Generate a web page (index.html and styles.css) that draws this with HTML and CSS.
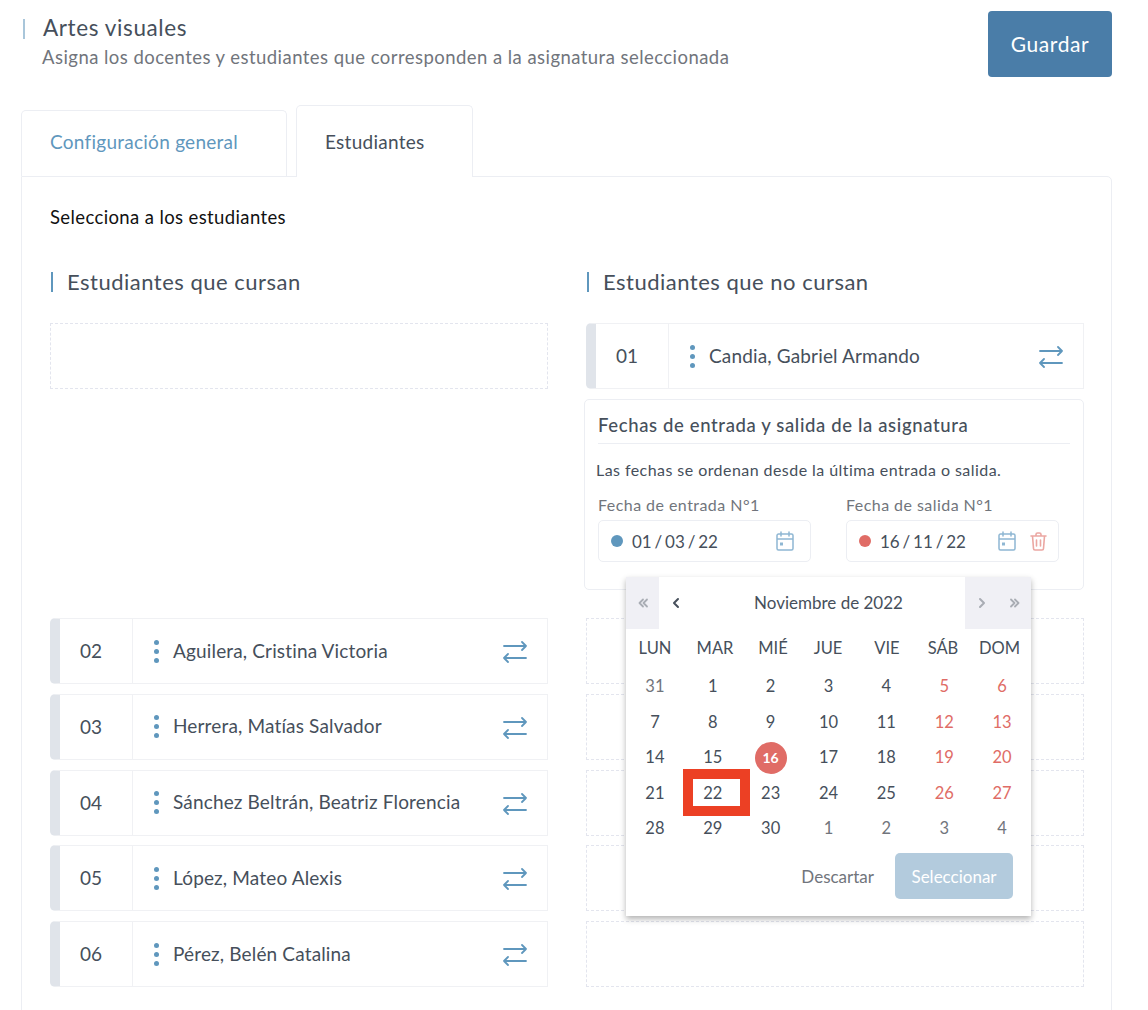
FILE: index.html
```html
<!DOCTYPE html>
<html lang="es">
<head>
    <meta charset="UTF-8">
    <meta name="viewport" content="width=device-width, initial-scale=1.0">
    <title>Artes visuales</title>
    <link rel="stylesheet" href="styles.css">
</head>
<body>
    <svg class="icon-defs" width="0" height="0" aria-hidden="true">
        <symbol id="swap" viewBox="0 0 24 24">
            <path d="M1 7H23M19 3L23 7L19 11M23 19H1M5 15L1 19L5 23" fill="none" stroke="currentColor" stroke-width="1.8" stroke-linecap="round" stroke-linejoin="round"/>
        </symbol>
        <symbol id="calendar" viewBox="0 0 18 20">
            <path d="M2.500 3H15.500A1.500 1.500 0 0 1 17 4.500V17.500A1.500 1.500 0 0 1 15.500 19H2.500A1.500 1.500 0 0 1 1 17.500V4.500A1.500 1.500 0 0 1 2.500 3ZM1 8H17M5 1V5M13 1V5" fill="none" stroke="currentColor" stroke-width="1.500" stroke-linecap="round"/>
            <rect x="4" y="11.500" width="3" height="3" fill="currentColor"/>
        </symbol>
        <symbol id="trash" viewBox="0 0 17 19">
            <path d="M1 4H16M6 4V2.500A1.500 1.500 0 0 1 7.500 1H9.500A1.500 1.500 0 0 1 11 2.500V4M2.500 4L3.500 16.500A1.500 1.500 0 0 0 5 18H12A1.500 1.500 0 0 0 13.500 16.500L14.500 4M6.500 8V14M10.500 8V14" fill="none" stroke="currentColor" stroke-width="1.600" stroke-linecap="round" stroke-linejoin="round"/>
        </symbol>
        <symbol id="chevron" viewBox="0 0 12 12">
            <path d="M8 2L4 6L8 10" fill="none" stroke="currentColor" stroke-width="2" stroke-linecap="round" stroke-linejoin="round"/>
        </symbol>
        <symbol id="chevron-double" viewBox="0 0 12 12">
            <path d="M6 2.500L2.500 6L6 9.500M10 2.500L6.500 6L10 9.500" fill="none" stroke="currentColor" stroke-width="1.800" stroke-linecap="round" stroke-linejoin="round"/>
        </symbol>
    </svg>

    <div class="page">
        <div class="header">
            <div>
                <h1 class="title">Artes visuales</h1>
                <p class="subtitle">Asigna los docentes y estudiantes que corresponden a la asignatura seleccionada</p>
            </div>
            <button class="save-btn">Guardar</button>
        </div>

        <div class="tabs">
            <div class="tab">Configuración general</div>
            <div class="tab active">Estudiantes</div>
        </div>

        <div class="panel">
            <p class="panel-intro">Selecciona a los estudiantes</p>

            <div class="columns">
                <div>
                    <h2 class="col-title">Estudiantes que cursan</h2>
                    <div class="slot"></div>
                    <div class="list list-left">
                        <div class="student">
                            <div class="num">02</div>
                            <div class="dots"><i></i><i></i><i></i></div>
                            <div class="name">Aguilera, Cristina Victoria</div>
                            <svg class="swap"><use href="#swap"/></svg>
                        </div>
                        <div class="student">
                            <div class="num">03</div>
                            <div class="dots"><i></i><i></i><i></i></div>
                            <div class="name">Herrera, Matías Salvador</div>
                            <svg class="swap"><use href="#swap"/></svg>
                        </div>
                        <div class="student">
                            <div class="num">04</div>
                            <div class="dots"><i></i><i></i><i></i></div>
                            <div class="name">Sánchez Beltrán, Beatriz Florencia</div>
                            <svg class="swap"><use href="#swap"/></svg>
                        </div>
                        <div class="student">
                            <div class="num">05</div>
                            <div class="dots"><i></i><i></i><i></i></div>
                            <div class="name">López, Mateo Alexis</div>
                            <svg class="swap"><use href="#swap"/></svg>
                        </div>
                        <div class="student">
                            <div class="num">06</div>
                            <div class="dots"><i></i><i></i><i></i></div>
                            <div class="name">Pérez, Belén Catalina</div>
                            <svg class="swap"><use href="#swap"/></svg>
                        </div>
                    </div>
                </div>

                <div>
                    <h2 class="col-title">Estudiantes que no cursan</h2>
                    <div class="student">
                        <div class="num">01</div>
                        <div class="dots"><i></i><i></i><i></i></div>
                        <div class="name">Candia, Gabriel Armando</div>
                        <svg class="swap"><use href="#swap"/></svg>
                    </div>

                    <div class="dates">
                        <h3 class="dates-title">Fechas de entrada y salida de la asignatura</h3>
                        <p class="dates-note">Las fechas se ordenan desde la última entrada o salida.</p>
                        <div class="date-fields">
                            <div>
                                <label class="date-label">Fecha de entrada N°1</label>
                                <div class="date-input">
                                    <span class="dot"></span>
                                    <span class="date-value">01 / 03 / 22</span>
                                    <svg class="cal-icon"><use href="#calendar"/></svg>
                                </div>
                            </div>
                            <div>
                                <label class="date-label">Fecha de salida N°1</label>
                                <div class="date-input">
                                    <span class="dot red"></span>
                                    <span class="date-value">16 / 11 / 22</span>
                                    <svg class="cal-icon"><use href="#calendar"/></svg>
                                    <svg class="trash-icon"><use href="#trash"/></svg>
                                </div>
                            </div>
                        </div>

                        <div class="calendar">
                            <div class="cal-head">
                                <span class="cal-nav shaded"><svg><use href="#chevron-double"/></svg></span>
                                <span class="cal-nav dark"><svg><use href="#chevron"/></svg></span>
                                <span class="cal-title">Noviembre de 2022</span>
                                <span class="cal-nav shaded"><svg class="flip"><use href="#chevron"/></svg></span>
                                <span class="cal-nav shaded"><svg class="flip"><use href="#chevron-double"/></svg></span>
                            </div>
                            <div class="weekdays">
                                <span>LUN</span><span>MAR</span><span>MIÉ</span><span>JUE</span><span>VIE</span><span>SÁB</span><span>DOM</span>
                            </div>
                            <div class="days">
                                <span class="muted">31</span><span>1</span><span>2</span><span>3</span><span>4</span><span class="weekend">5</span><span class="weekend">6</span>
                                <span>7</span><span>8</span><span>9</span><span>10</span><span>11</span><span class="weekend">12</span><span class="weekend">13</span>
                                <span>14</span><span>15</span><span><b class="today">16</b></span><span>17</span><span>18</span><span class="weekend">19</span><span class="weekend">20</span>
                                <span>21</span><span class="marked">22</span><span>23</span><span>24</span><span>25</span><span class="weekend">26</span><span class="weekend">27</span>
                                <span>28</span><span>29</span><span>30</span><span class="muted">1</span><span class="muted">2</span><span class="muted">3</span><span class="muted">4</span>
                            </div>
                            <div class="cal-foot">
                                <span class="discard">Descartar</span>
                                <button class="select-btn">Seleccionar</button>
                            </div>
                        </div>
                    </div>

                    <div class="list list-right">
                        <div class="slot"></div>
                        <div class="slot"></div>
                        <div class="slot"></div>
                        <div class="slot"></div>
                        <div class="slot"></div>
                    </div>
                </div>
            </div>
        </div>
    </div>
</body>
</html>
```

FILE: styles.css
```css
:root {
    --primary-color: #4a7da8;
    --accent-color: #5f97bd;
    --danger-color: #e06c66;
    --text-color: #464f5b;
    --muted-color: #71757c;
    --line-color: #eceef3;
}

* {
    margin: 0;
    padding: 0;
    box-sizing: border-box;
    font-family: 'Lato', 'Noto Sans', sans-serif;
}

html, body {
    height: 1010px;
    overflow: hidden;
}

body {
    background-color: white;
    color: var(--text-color);
}

.icon-defs {
    position: absolute;
}

.page {
    padding: 11px 36px 0 21px;
}

.header {
    display: flex;
    justify-content: space-between;
    height: 66px;
}

.title {
    font-size: 22.5px;
    font-weight: 400;
    letter-spacing: 0.6px;
    line-height: 24px;
    margin: 8px 0 0 2px;
    padding: 0 0 2px 18px;
    border-left: 2px solid #a9c6da;
    height: 20px;
    display: flex;
    align-items: center;
}

.subtitle {
    font-size: 18.5px;
    letter-spacing: 0.45px;
    line-height: 24px;
    margin: 6px 0 0 21px;
    color: var(--muted-color);
}

.save-btn {
    width: 124px;
    height: 66px;
    padding-bottom: 2px;
    background-color: var(--primary-color);
    color: white;
    border: none;
    border-radius: 4px;
    font-size: 21px;
    letter-spacing: 0.6px;
}

.tabs {
    display: flex;
    align-items: flex-end;
    gap: 9px;
    margin-top: 28px;
}

.tab {
    height: 66px;
    width: 266px;
    padding-left: 28px;
    line-height: 61px;
    font-size: 19px;
    letter-spacing: 0.26px;
    color: var(--accent-color);
    background: white;
    border: 1px solid var(--line-color);
    border-bottom: none;
    border-radius: 5px 5px 0 0;
}

.tab.active {
    height: 72px;
    width: 177px;
    line-height: 71px;
    margin-bottom: -1px;
    position: relative;
    color: var(--text-color);
}

.panel {
    height: 900px;
    padding: 29px 27px 29px 28px;
    border: 1px solid var(--line-color);
    border-radius: 0 5px 0 0;
}

.panel-intro {
    font-size: 18.5px;
    letter-spacing: 0.38px;
    line-height: 22px;
    color: #111;
}

.columns {
    display: grid;
    grid-template-columns: 498px 498px;
    gap: 38px;
    margin-top: 41px;
}

.col-title {
    font-size: 22px;
    font-weight: 400;
    letter-spacing: 0.5px;
    line-height: 20px;
    height: 20px;
    margin: 3px 0 31px 1px;
    padding-left: 14px;
    border-left: 2px solid var(--accent-color);
}

.slot {
    height: 66px;
    border: 1px dashed #e3e5ee;
}

.list {
    display: flex;
    flex-direction: column;
    gap: 9.75px;
}

.list-left {
    margin-top: 229px;
}

.list-right {
    margin-top: 28px;
}

.student {
    display: flex;
    align-items: center;
    height: 66px;
    border: 1px solid #f0f1f4;
    border-left: 10px solid #e0e4ea;
    border-radius: 5px 0 0 5px;
}

.num {
    width: 73px;
    height: 100%;
    padding-left: 20px;
    line-height: 64px;
    font-size: 19px;
    border-right: 1px solid #f0f1f4;
}

.dots {
    display: flex;
    flex-direction: column;
    gap: 4px;
    margin: 0 14px 0 21px;
}

.dots i {
    width: 5px;
    height: 5px;
    border-radius: 50%;
    background-color: var(--accent-color);
}

.name {
    flex: 1;
    padding-bottom: 2px;
    font-size: 19px;
    letter-spacing: 0.15px;
}

.swap {
    width: 24px;
    height: 24px;
    margin-right: 20px;
    color: var(--accent-color);
}

.dates {
    position: relative;
    width: 500px;
    height: 191px;
    margin: 10px 0 0 -2px;
    padding: 14px 13px 0;
    border: 1px solid var(--line-color);
    border-radius: 5px;
}

.dates-title {
    font-size: 18.5px;
    font-weight: 500;
    letter-spacing: 0.63px;
    line-height: 22px;
    padding-bottom: 7px;
    border-bottom: 1px solid var(--line-color);
}

.dates-note {
    font-size: 16px;
    letter-spacing: 0.44px;
    line-height: 20px;
    margin: 16px 0 0 -2px;
}

.date-fields {
    display: grid;
    grid-template-columns: 213px 213px;
    gap: 35px;
    margin-top: 15px;
}

.date-label {
    display: block;
    font-size: 16px;
    letter-spacing: 0.45px;
    line-height: 20px;
    color: var(--muted-color);
}

.date-input {
    display: flex;
    align-items: center;
    height: 42px;
    margin-top: 5px;
    padding: 0 12px;
    border: 1px solid var(--line-color);
    border-radius: 5px;
}

.dot {
    width: 12px;
    height: 12px;
    border-radius: 50%;
    background-color: var(--accent-color);
}

.dot.red {
    background-color: var(--danger-color);
}

.date-value {
    flex: 1;
    margin-left: 9px;
    font-size: 17px;
    word-spacing: -1.5px;
}

.cal-icon {
    width: 18px;
    height: 20px;
    margin-right: 4px;
    color: #8fb7d3;
}

.trash-icon {
    width: 17px;
    height: 19px;
    margin: 0 -1px 0 10px;
    color: #eba7a2;
}

.calendar {
    position: absolute;
    top: 177px;
    left: 41px;
    width: 405px;
    height: 339px;
    background: white;
    box-shadow: 0 3px 6px rgba(0,0,0,0.3);
    z-index: 5;
}

.cal-head {
    display: flex;
    height: 52px;
    align-items: stretch;
}

.cal-nav {
    display: flex;
    align-items: center;
    justify-content: center;
    width: 33px;
    color: #a9adb4;
}

.cal-nav svg {
    width: 12px;
    height: 12px;
}

.cal-nav svg.flip {
    transform: scaleX(-1);
}

.cal-nav.shaded {
    background-color: #f0f0f5;
}

.cal-nav.dark {
    color: var(--text-color);
}

.cal-title {
    flex: 1;
    text-align: center;
    line-height: 52px;
    font-size: 17px;
}

.weekdays {
    display: grid;
    grid-template-columns: 58px 62px 54px 56px 62px 50px 63px;
    height: 40px;
    line-height: 39px;
    font-size: 16.5px;
    text-align: center;
}

.days {
    display: grid;
    grid-template-columns: repeat(7, 1fr);
    text-align: center;
}

.days span {
    height: 35.5px;
    line-height: 35.5px;
    font-size: 16.5px;
}

.days .muted {
    color: var(--muted-color);
}

.days .weekend {
    color: var(--danger-color);
}

.today {
    display: inline-block;
    width: 32px;
    height: 32px;
    line-height: 32px;
    border-radius: 50%;
    background-color: var(--danger-color);
    color: white;
    font-size: 14px;
}

.marked {
    position: relative;
}

.marked::after {
    content: "";
    position: absolute;
    top: -6.5px;
    left: -1px;
    box-sizing: border-box;
    width: 67px;
    height: 47px;
    border: 10px solid #ec4024;
}

.cal-foot {
    display: flex;
    justify-content: flex-end;
    align-items: center;
    gap: 21px;
    margin-top: 6.5px;
    padding-right: 18px;
}

.discard {
    font-size: 17px;
    color: var(--muted-color);
}

.select-btn {
    width: 118px;
    height: 46px;
    background-color: #b3cbdd;
    color: white;
    border: none;
    border-radius: 5px;
    font-size: 17px;
}
```
